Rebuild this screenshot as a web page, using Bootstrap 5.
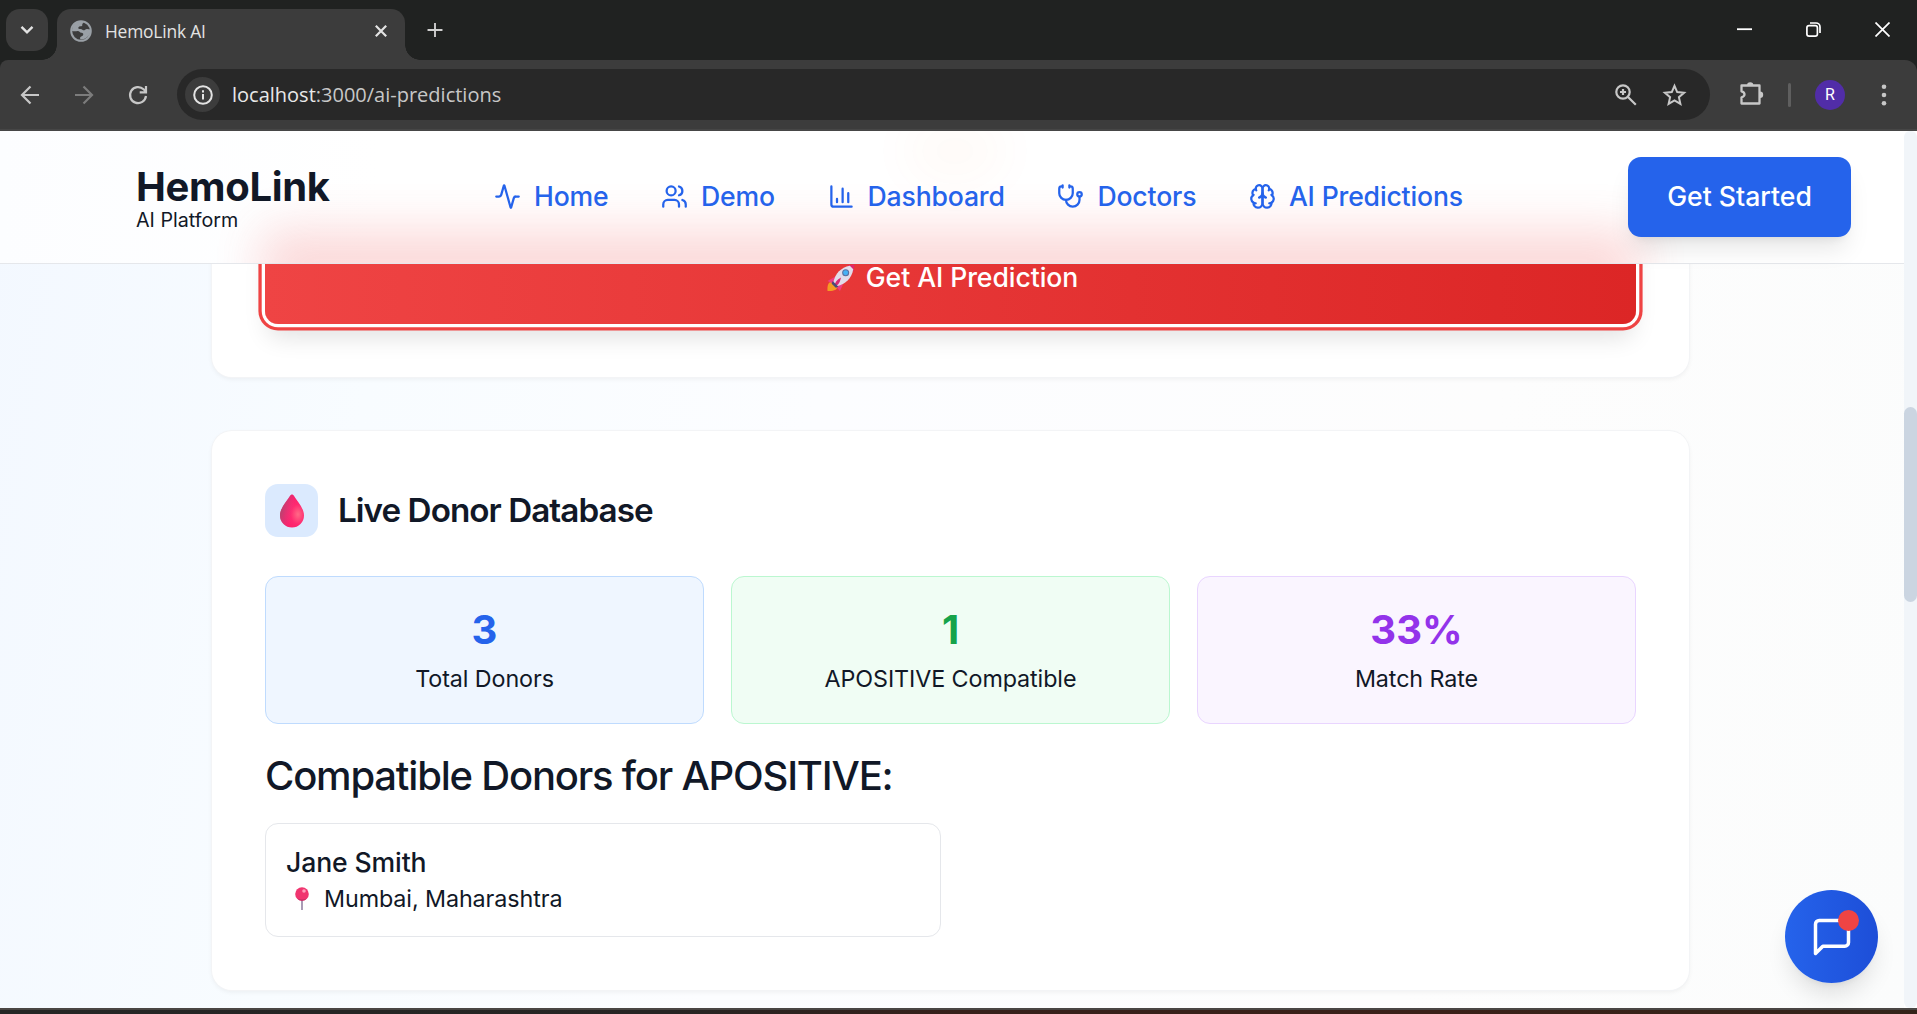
<!DOCTYPE html>
<html lang="en">
<head>
<meta charset="utf-8">
<title>HemoLink AI</title>
<link href="https://cdn.jsdelivr.net/npm/bootstrap@5.3.0/dist/css/bootstrap.min.css" rel="stylesheet">
<style>
html,body{height:100%;overflow:hidden}
body{font-family:Inter,"Liberation Sans",sans-serif;color:#111827;background:#202221;line-height:1.2}
svg{display:block;flex:none}
.chrome{font-family:"Open Sans","Noto Sans",sans-serif;color:#e3e3e3;height:131px}
.tabstrip{height:60px;padding:9px 0 0 6px}
.tab-search{width:42px;height:42px;border-radius:14px;background:#3c3c3c}
.browser-tab{width:348px;height:51px;border-radius:14px 14px 0 0;background:#3c3c3c;margin-left:9px;padding:0 18px 0 13px;position:relative;font-size:17.4px;letter-spacing:-.2px}
.browser-tab::before,.browser-tab::after{content:"";position:absolute;bottom:0;width:15px;height:15px}
.browser-tab::before{left:-15px;background:radial-gradient(circle at 0 0,transparent 14.5px,#3c3c3c 15px)}
.browser-tab::after{right:-15px;background:radial-gradient(circle at 100% 0,transparent 14.5px,#3c3c3c 15px)}
.browser-tab svg{margin-bottom:8px}
.tab-title{margin:-6px 0 0 13px}
.toolbar{height:71px;background:#3c3c3c;border-radius:8px 12px 0 0;border-bottom:2px solid #464646;padding-left:19px}
.omnibox{height:51px;width:1533px;border-radius:26px;background:#282828;margin-left:28px;padding:0 23px 0 8px}
.site-info{width:35px;height:35px;border-radius:50%;background:#3c3c3c}
.url{font-size:20px;margin-left:12px;color:#c7c7c7}
.url span{color:#e8e8e8}
.avatar{width:30px;height:30px;background:#512da8;color:#fff;font-size:16px;font-family:Roboto,sans-serif}
.vsep{width:3px;height:24px;background:#5f5f5f;border-radius:2px}
.page{height:877px;background:#fff}
.viewport{width:1904px;height:877px;overflow:hidden;background:linear-gradient(100deg,#f3f8ff 0,#f8fcff 20%,#fcfdff 42%,#fdfdfd 75%,#fbfcfc 100%)}
.scrolltrack{width:13px;background:#f1f5f9;border-radius:6px}
.scrollthumb{height:195px;margin-top:276px;background:#cbd5e1;border-radius:7px}
.site-header{height:133px;background:#fefefe;border-bottom:1px solid #e5e7eb;padding:0 53px;z-index:5}
.header-glow{position:absolute;inset:0;overflow:hidden;z-index:-1;background:linear-gradient(to right,#fcfdff,#fff 20%)}
.header-glow::before{content:"";position:absolute;left:262px;top:99px;width:1377px;height:70px;background:#ef4444;opacity:.2;filter:blur(24px)}
.header-glow::after{content:"";position:absolute;left:900px;top:-20px;width:110px;height:80px;border-radius:50%;background:#f97316;opacity:.025;filter:blur(22px)}
.brand{margin:5px 0 0 83px;width:200px}
.brand-name{font-size:40px;font-weight:700;line-height:40px;letter-spacing:-.34px}
.brand-sub{font-size:19.7px;line-height:24px;margin-top:1px}
.nav-list{gap:52.6px;margin-left:158px}
.nav-list a{gap:13px;font-size:26.6px;letter-spacing:-.16px;font-weight:500;color:#2563eb;text-decoration:none;line-height:32px;white-space:nowrap;margin-top:-2px}
.btn-start{width:223px;height:80px;border-radius:13px;background:#2563eb;color:#fff;font-weight:500;font-size:26.6px;box-shadow:0 16px 25px -5px rgba(0,0,0,.1),0 7px 10px -7px rgba(0,0,0,.1)}
.content{margin:-133px 0 0 212px;width:1477px}
.panel{background:#fff;border-radius:20px;box-shadow:0 0 0 1px #f3f4f6,0 2px 5px rgba(0,0,0,.06);padding:53px}
.panel-first{height:246px;padding-top:99px;border-radius:0 0 20px 20px}
.btn-predict{height:94px;border-radius:13px;background:linear-gradient(to right,#ef4444,#dc2626);color:#fff;font-size:26.6px;letter-spacing:-.07px;font-weight:500;box-shadow:0 0 0 3.300px #fff,0 0 0 6.600px #ef4444,0 16px 25px -3px rgba(0,0,0,.12);gap:11px;padding:2px 0 0 4px}
.panel-live{margin-top:54px;height:559px}
.drop-tile{width:53px;height:53px;border-radius:13px;background:#dbeafe}
.panel-title{font-size:33.25px;font-weight:600;letter-spacing:-.97px;margin-left:20px}
.stats{gap:27px;margin-top:39px}
.stat{height:148px;border-radius:13px;border:1px solid;padding-top:29px;text-align:center}
.stat-num{font-size:40px;line-height:47px;font-weight:700}
.stat-lbl{font-size:23.3px;letter-spacing:-.09px;line-height:34px;margin-top:9px}
.s-blue{background:#eff6ff;border-color:#bfdbfe}.s-blue .stat-num{color:#2563eb}
.s-green{background:#f0fdf4;border-color:#bbf7d0}.s-green .stat-num{color:#16a34a}
.s-purple{background:#faf5ff;border-color:#e9d5ff}.s-purple .stat-num{color:#9333ea}
.sub-title{font-size:40px;font-weight:500;letter-spacing:-1.200px;line-height:48px;margin:28px 0 23px}
.donor{width:676px;height:114px;border:1px solid #e5e7eb;border-radius:13px;padding:20px 20px}
.donor-name{font-size:26.6px;letter-spacing:-.12px;font-weight:500;line-height:37px}
.donor-loc{font-size:23.3px;letter-spacing:-.09px;line-height:33px;gap:15px;padding-left:9px;margin-top:1px}
.chat{position:fixed;left:1785px;top:890px;width:93px;height:93px;border-radius:50%;background:linear-gradient(to right,#2563eb,#1d4ed8);box-shadow:0 16px 25px -5px rgba(0,0,0,.12),0 7px 10px -7px rgba(0,0,0,.1);z-index:6}
.chat-dot{position:absolute;left:52.5px;top:19.5px;width:21px;height:21px;border-radius:50%;background:#ef4444}
.desk{height:6px;border-top:2px solid #4a4644;background:linear-gradient(to right,#242625,#262423 35%,#36201a 50%,#3a2018 75%,#33241a)}
</style>
<script src="https://cdn.jsdelivr.net/npm/bootstrap@5.3.0/dist/js/bootstrap.bundle.min.js"></script>
</head>
<body>
<div class="chrome">
  <div class="tabstrip d-flex align-items-start">
    <div class="tab-search d-flex align-items-center justify-content-center">
      <svg width="14" height="10" viewBox="0 0 14 10" fill="none" stroke="#e3e3e3" stroke-width="2.4"><path d="M1.500 1.800 7 7.300 12.500 1.800"/></svg>
    </div>
    <div class="browser-tab d-flex align-items-center">
      <svg width="22" height="22" viewBox="0 0 22 22"><circle cx="11" cy="11" r="9.800" fill="#3c3c3c" stroke="#9aa0a6" stroke-width="2"/><path d="M2 11C2 5 6 2 11 1.600c1.500 0 2.500.4 2.300 1.400-1 .6-1.300 1.500-1 2.800-1.300.8-3 .3-3.800 1.500-.8 1 .3 2 1.500 1.700 2-.3 2.200.8 3.200 1.200 1.800.3 2-1.500 4-1.300 1 0 2 .5 3.300.6.300 3-1 6-3.800 8-2 1.500-4.200 2-6.200 1.900-.8-1.200-.5-2.400.7-2.900 1.500-.6 2.300-1.500 2-2.800-.5-1.500-3-.6-3.700-2C8.500 10 5 12 2 11z" fill="#9aa0a6"/></svg>
      <span class="tab-title">HemoLink AI</span>
      <svg class="ms-auto" width="12" height="12" viewBox="0 0 12 12" stroke="#e3e3e3" stroke-width="2.200"><path d="M.8.8 11.200 11.200M11.200.8.8 11.200"/></svg>
    </div>
    <svg style="margin:14px 0 0 22px" width="16" height="14" viewBox="0 0 16 15" stroke="#d0d0d0" stroke-width="2"><path d="M8 0v15M0 7.500h16"/></svg>
    <div class="d-flex ms-auto align-items-center" style="gap:54px;margin:13px 27px 0 0">
      <svg width="15" height="15" viewBox="0 0 15 15" stroke="#fff" stroke-width="1.800"><path d="M0 7.200h15"/></svg>
      <svg width="15" height="15" viewBox="0 0 15 15" fill="none" stroke="#fff" stroke-width="1.700"><rect x=".9" y="3.600" width="10.500" height="10.500" rx="2.200"/><path d="M4 1h6a4 4 0 0 1 4 4v6"/></svg>
      <svg width="15" height="15" viewBox="0 0 15 15" stroke="#fff" stroke-width="1.700"><path d="M.5.5l14 14M14.500.5l-14 14"/></svg>
    </div>
  </div>
  <div class="toolbar d-flex align-items-center">
    <svg width="22" height="22" viewBox="0 0 22 22" fill="none" stroke="#c7c7c7" stroke-width="2.200"><path d="M20 11H3.500M11.500 2.500 3 11l8.500 8.500"/></svg>
    <svg style="margin-left:32px" width="22" height="22" viewBox="0 0 22 22" fill="none" stroke="#7c7c7c" stroke-width="2.200"><path d="M2 11h16.500M10.500 2.500 19 11l-8.500 8.500"/></svg>
    <svg style="margin-left:32px" width="22" height="22" viewBox="0 0 22 22" fill="none" stroke="#c7c7c7" stroke-width="2.200"><path d="M19 12a8 8 0 1 1-2.400-6.700L18.800 7.500M19 2v6.300h-6.300"/></svg>
    <div class="omnibox d-flex align-items-center">
      <div class="site-info d-flex align-items-center justify-content-center"><svg width="20" height="20" viewBox="0 0 20 20" fill="none" stroke="#e3e3e3" stroke-width="2"><circle cx="10" cy="10" r="8.800"/><path d="M10 9v5.500M10 5.300v2.200"/></svg></div>
      <div class="url"><span>localhost</span>:3000/ai-predictions</div>
      <svg class="ms-auto" width="22" height="22" viewBox="0 0 22 22" fill="none" stroke="#c7c7c7" stroke-width="2.200"><circle cx="8" cy="8" r="6.700"/><path d="M13 13l7.800 7.800M8 5v6M5 8h6"/></svg>
      <svg style="margin-left:25px" width="25" height="24" viewBox="0 0 24 24" fill="none" stroke="#c7c7c7" stroke-width="2"><path d="M12 2.800l2.700 6.300 6.900.6-5.200 4.500 1.500 6.700L12 17.400l-5.900 3.500 1.500-6.700-5.200-4.500 6.900-.6z"/></svg>
    </div>
    <svg style="margin-left:28px" width="27" height="27" viewBox="0 0 27 27"><path d="M3.500 4.500H9.500M16 4.500h5.500v18h-18v-6.200c4-1 4-5 0-6V4.500H21.500" fill="none" stroke="#c7c7c7" stroke-width="2.300" stroke-linejoin="round"/><path d="M9 4.500a3.200 3.200 0 0 1 6.400 0zM22 10.500a3.200 3.200 0 0 1 0 6.400z" fill="#c7c7c7"/></svg>
    <div class="vsep" style="margin-left:23px"></div>
    <div class="avatar rounded-circle d-flex align-items-center justify-content-center" style="margin-left:24px">R</div>
    <svg style="margin-left:36px" width="6" height="22" viewBox="0 0 6 22" fill="#c7c7c7"><circle cx="3" cy="2.700" r="2.300"/><circle cx="3" cy="11" r="2.300"/><circle cx="3" cy="19.300" r="2.300"/></svg>
  </div>
</div>
<div class="page d-flex">
  <div class="viewport">
    <header class="site-header position-relative d-flex align-items-center">
      <div class="header-glow"></div>
      <div class="brand"><div class="brand-name">HemoLink</div><div class="brand-sub">AI Platform</div></div>
      <nav class="nav-list d-flex">
        <a href="#" class="d-flex align-items-center"><svg width="27" height="27" viewBox="0 0 24 24" fill="none" stroke="currentColor" stroke-width="2" stroke-linecap="round" stroke-linejoin="round"><path d="M22 12h-2.480a2 2 0 0 0-1.930 1.460l-2.350 8.360a.25.25 0 0 1-.48 0L9.240 2.180a.25.25 0 0 0-.48 0l-2.350 8.360A2 2 0 0 1 4.490 12H2"/></svg>Home</a>
        <a href="#" class="d-flex align-items-center"><svg width="27" height="27" viewBox="0 0 24 24" fill="none" stroke="currentColor" stroke-width="2" stroke-linecap="round" stroke-linejoin="round"><path d="M16 21v-2a4 4 0 0 0-4-4H6a4 4 0 0 0-4 4v2"/><circle cx="9" cy="7" r="4"/><path d="M22 21v-2a4 4 0 0 0-3-3.870M16 3.130a4 4 0 0 1 0 7.750"/></svg>Demo</a>
        <a href="#" class="d-flex align-items-center"><svg width="27" height="27" viewBox="0 0 24 24" fill="none" stroke="currentColor" stroke-width="2" stroke-linecap="round" stroke-linejoin="round"><path d="M3 3v16a2 2 0 0 0 2 2h16M18 17V9M13 17V5M8 17v-3"/></svg>Dashboard</a>
        <a href="#" class="d-flex align-items-center"><svg width="27" height="27" viewBox="0 0 24 24" fill="none" stroke="currentColor" stroke-width="2" stroke-linecap="round" stroke-linejoin="round"><path d="M11 2v2M5 2v2M5 3H4a2 2 0 0 0-2 2v4a6 6 0 0 0 12 0V5a2 2 0 0 0-2-2h-1"/><path d="M8 15a6 6 0 0 0 12 0v-3"/><circle cx="20" cy="10" r="2"/></svg>Doctors</a>
        <a href="#" class="d-flex align-items-center"><svg width="27" height="27" viewBox="0 0 24 24" fill="none" stroke="currentColor" stroke-width="2" stroke-linecap="round" stroke-linejoin="round"><path d="M12 5a3 3 0 1 0-5.997.125 4 4 0 0 0-2.526 5.770 4 4 0 0 0 .556 6.588A4 4 0 1 0 12 18Z"/><path d="M12 5a3 3 0 1 1 5.997.125 4 4 0 0 1 2.526 5.770 4 4 0 0 1-.556 6.588A4 4 0 1 1 12 18Z"/><path d="M15 13a4.500 4.500 0 0 1-3-4 4.500 4.500 0 0 1-3 4M17.599 6.500a3 3 0 0 0 .399-1.375M6.003 5.125A3 3 0 0 0 6.401 6.500M3.477 10.896a4 4 0 0 1 .585-.396M19.938 10.500a4 4 0 0 1 .585.396M6 18a4 4 0 0 1-1.967-.516M19.967 17.484A4 4 0 0 1 18 18"/></svg>AI Predictions</a>
      </nav>
      <button class="btn btn-start ms-auto border-0 p-0">Get Started</button>
    </header>
    <main class="content">
      <section class="panel panel-first">
        <div class="btn-predict d-flex align-items-center justify-content-center">
          <svg width="28" height="28" viewBox="0 0 27 27"><path d="M.5 26c-.5-6 1-9 4.500-9l5 5c0 3-4 4.500-9.500 4z" fill="#f59b23"/><path d="M8 12l-7.500 4.500L6 19zM15.500 19.500 12.500 26 8 21z" fill="#ef3e84"/><path d="M19.500 1.500 26.500.5 25.500 7.500z" fill="#e0286a"/><path d="M6 18C8 9 13.500 3.500 22 1.800l3.300 3.300C24 13.500 18 19.500 9.500 21.500z" fill="#e2dcea"/><circle cx="18" cy="8.500" r="3.400" fill="#5b6fa0"/><circle cx="18" cy="8.500" r="2.400" fill="#45b1f5"/><path d="M13.500 13c-4 2-6 5-6.500 8.500 3.500-.5 5.500-3.500 6.500-8.500z" fill="#d92a72"/><path d="M5.500 16.500l5.500 5.500-2.500 1-4-4z" fill="#4b4a78"/></svg>
          <span>Get AI Prediction</span>
        </div>
      </section>
      <section class="panel panel-live">
        <div class="d-flex align-items-center">
          <div class="drop-tile d-flex align-items-center justify-content-center">
            <svg width="24" height="34" viewBox="0 0 24 34"><defs><radialGradient id="g1" cx=".75" cy=".6" r=".6"><stop offset="0" stop-color="#ff6a86"/><stop offset=".5" stop-color="#ff2a70"/><stop offset="1" stop-color="#fc1d68"/></radialGradient><linearGradient id="g2" x1="0" y1=".2" x2=".6" y2=".4"><stop offset="0" stop-color="#96506a"/><stop offset="1" stop-color="#e8408a" stop-opacity="0"/></linearGradient></defs><path d="M10.300 1.500q1.700-2 3.400 0C17 7 24 14 24 21.500a12 12 0 0 1-24 0C0 14 7 7 10.300 1.500z" fill="url(#g1)"/><path d="M10.300 1.500q1.700-2 3.400 0C17 7 24 14 24 21.500a12 12 0 0 1-24 0C0 14 7 7 10.300 1.500z" fill="url(#g2)"/></svg>
          </div>
          <h3 class="panel-title mb-0">Live Donor Database</h3>
        </div>
        <div class="stats d-flex">
          <div class="stat s-blue flex-fill w-100"><div class="stat-num">3</div><div class="stat-lbl">Total Donors</div></div>
          <div class="stat s-green flex-fill w-100"><div class="stat-num">1</div><div class="stat-lbl">APOSITIVE Compatible</div></div>
          <div class="stat s-purple flex-fill w-100"><div class="stat-num">33%</div><div class="stat-lbl">Match Rate</div></div>
        </div>
        <h4 class="sub-title">Compatible Donors for APOSITIVE:</h4>
        <div class="donor">
          <div class="donor-name">Jane Smith</div>
          <div class="donor-loc d-flex align-items-center"><svg width="14" height="24" viewBox="0 0 14 24"><path d="M7 12v11" stroke="#9b8aa8" stroke-width="1.700"/><circle cx="7" cy="7" r="6.800" fill="#f0356f"/><path d="M2 11.500q5 2 10 0a6.800 6.800 0 0 1-10 0z" fill="#c22e64"/><circle cx="9" cy="4" r="1.800" fill="#ff9dbb"/></svg><span>Mumbai, Maharashtra</span></div>
        </div>
      </section>
    </main>
  </div>
  <div class="scrolltrack"><div class="scrollthumb"></div></div>
</div>
<div class="desk"></div>
<div class="chat d-flex align-items-center justify-content-center">
  <svg width="44" height="44" viewBox="0 0 24 24" fill="none" stroke="#fff" stroke-width="1.900" stroke-linecap="round" stroke-linejoin="round"><path d="M21 15a2 2 0 0 1-2 2H7l-4 4V5a2 2 0 0 1 2-2h14a2 2 0 0 1 2 2z"/></svg>
  <span class="chat-dot"></span>
</div>
</body>
</html>
